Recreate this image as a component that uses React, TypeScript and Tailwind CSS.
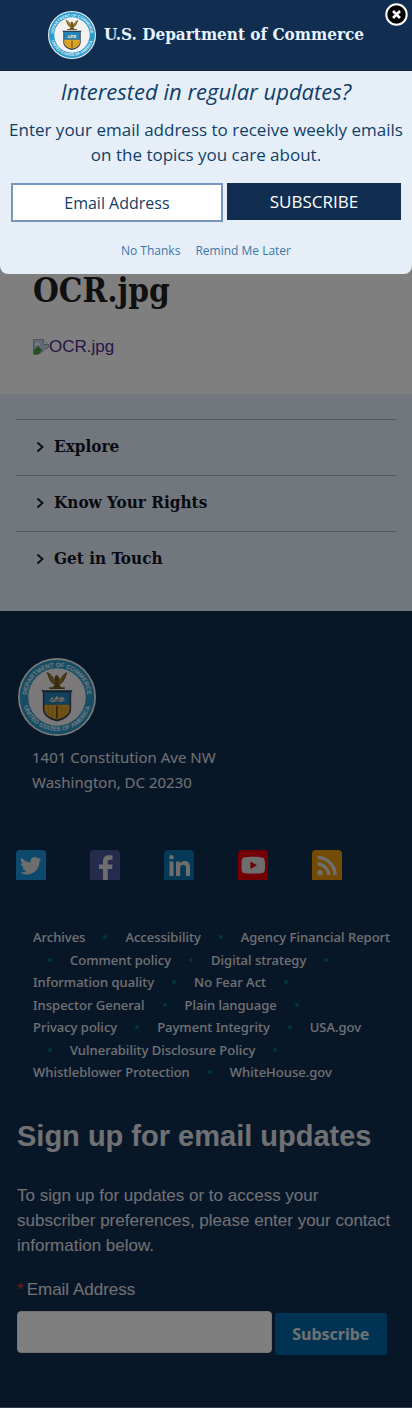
import { useId } from "react";

const serif = "font-['DejaVu_Serif_Condensed','DejaVu_Serif',serif] font-bold";
const linkRows: { lead: boolean; trail: boolean; items: string[] }[] = [
  { lead: false, trail: false, items: ["Archives", "Accessibility", "Agency Financial Report"] },
  { lead: true, trail: true, items: ["Comment policy", "Digital strategy"] },
  { lead: false, trail: true, items: ["Information quality", "No Fear Act"] },
  { lead: false, trail: true, items: ["Inspector General", "Plain language"] },
  { lead: false, trail: false, items: ["Privacy policy", "Payment Integrity", "USA.gov"] },
  { lead: true, trail: true, items: ["Vulnerability Disclosure Policy"] },
  { lead: false, trail: false, items: ["Whistleblower Protection", "WhiteHouse.gov"] },
];

function Seal({ className }: { className: string }) {
  const id = useId();
  return (
    <svg viewBox="0 0 80 80" className={className} role="img" aria-label="Department of Commerce seal">
      <defs>
        <path id={id + "t"} d="M9.300 46 A31.200 31.200 0 1 1 70.700 46" />
        <path id={id + "b"} d="M4.500 43 A35.700 35.700 0 0 0 75.500 43" />
      </defs>
      <circle cx="40" cy="40" r="40" fill="#f4f4f2" />
      <circle cx="40" cy="40" r="38.300" fill="#2d9bcb" />
      <circle cx="40" cy="40" r="29.500" fill="#f4f1f1" />
      <g fill="#e4f3fa" fontFamily="Liberation Sans, sans-serif" fontWeight="700" fontSize="6.300" textAnchor="middle">
        <text><textPath href={"#" + id + "t"} startOffset="50%">DEPARTMENT OF COMMERCE</textPath></text>
        <text><textPath href={"#" + id + "b"} startOffset="50%">UNITED STATES OF AMERICA</textPath></text>
      </g>
      <path d="M29.500 14C31 21 34 26 37.500 27L36 30h-4v1.800h16V30h-4l-1.500-3C46 26 49 21 50.500 14c-3 2-5.500 4-7.500 8l-1.500-3-1.500-1.500-2.500 1.500.5 3C35.500 18.500 33 16 29.500 14z" fill="#70571d" />
      <path d="M32 17.500l5 8.500M34 17.500l4 7.500M48 17.500l-5 8.500M46 17.500l-4 7.500" stroke="#c6a14a" strokeWidth=".9" />
      <path d="M24 33h32l-1.500 3v16c0 6-5 11-14.500 13-9.500-2-14.500-7-14.500-13V36z" fill="#263f58" />
      <path d="M26 35h28l-1 2v11H27V37z" fill="#2583b8" />
      <path d="M27 48h26v4c0 5-4 9-13 11-9-2-13-6-13-11z" fill="#e0a72c" />
      <path d="M39 49h2v13h-2z" fill="#71541a" />
      <path d="M31 50v9M35 50v11M45 50v11M49 50v9" stroke="#bd8421" strokeWidth=".7" />
      <path d="M32 44l3-4 2 2 3-3 2 2 4-1 2 3-3 2-5-1-4 1z" fill="#e8e7dd" />
      <path d="M33 43h14M37 41l-2 3M42 41l-1 3" stroke="#466171" strokeWidth=".7" />
    </svg>
  );
}

function Dot() {
  return (
    <span aria-hidden="true" className="flex w-[40px] shrink-0 justify-center">
      <span className="size-1 rounded-full bg-[#046b85]" />
    </span>
  );
}

const networks = [
  { name: "Twitter", color: "bg-[#1a91da]", art: <path fill="#ddd" d="M25.500 9c-.8.300-1.600.6-2.500.7.900-.6 1.600-1.400 1.900-2.400-.9.500-1.800.9-2.800 1.100A4.400 4.400 0 0 0 14.600 12.400c-3.700-.2-6.900-1.900-9.100-4.600-1.200 2.100-.6 4.600 1.400 5.900-.7 0-1.400-.2-2-.6 0 2.300 1.500 4 3.500 4.500-.6.200-1.300.2-2 .1.600 1.800 2.200 3 4.200 3A9 9 0 0 1 4 22.500c2 1.300 4.400 2 6.900 2 8.200 0 12.800-6.900 12.500-13.200.9-.6 1.600-1.400 2.100-2.300z" /> },
  { name: "Facebook", color: "bg-[#4a579b]", art: <path fill="#ddd" d="M13 30V19H9v-4.500h4V11.500c0-4.300 2.300-6.300 6.200-6.300 1.700 0 2.700.2 3.300.3v4.200h-2.400c-1.900 0-2.300.8-2.300 2.200v2.600h4.800l-.6 4.500h-4.200V30z" /> },
  { name: "LinkedIn", color: "bg-[#0873ae]", art: <path fill="#ddd" d="M5.500 11.500h4V26h-4zM7.500 5a2.300 2.300 0 1 1 0 4.600A2.300 2.300 0 0 1 7.500 5zM12 11.500h4v2c.8-1.500 2.300-2.400 4.500-2.400 4.200 0 5.500 2.500 5.500 6.500V26h-4v-7.500c0-2-.4-3.800-2.700-3.800-2.400 0-3.100 1.600-3.100 3.800V26H12z" /> },
  { name: "YouTube", color: "bg-[#e60008]", art: <><path fill="#ddd" d="M6 7.500c3-1 15-1 18.500 0 2 .5 2.500 2 2.500 8S26.500 22.500 24.500 23c-4 .8-14.500.8-18.500 0-2-.5-2.500-2-2.500-7.500S4 8 6 7.500z" /><path fill="#d8000c" d="M12.500 11.500v7.500l6.500-3.750z" /></> },
  { name: "RSS", color: "bg-[#e8960a]", art: <><circle cx="8" cy="22.700" r="2.700" fill="#ddd" /><path fill="none" stroke="#ddd" strokeWidth="3.400" d="M5.500 14A11.300 11.300 0 0 1 16.700 25.300M5.500 7.500A17.800 17.800 0 0 1 23.200 25.300" /></> },
];

function Popup() {
  return (
    <section role="dialog" aria-label="Email updates" className="absolute inset-x-0 top-0 rounded-b-lg bg-[#e6eff7] pb-[13px] text-center font-['Open_Sans',sans-serif] text-[#113e68]">
      <header className="flex h-[71px] items-center justify-center gap-2 border-b border-[#1b2440] bg-[#112e51]">
        <Seal className="size-[48px]" />
        <p className={serif + " text-[17px] whitespace-nowrap text-[#e8f4ff]"}>U.S. Department of Commerce</p>
      </header>
      <button type="button" aria-label="Close" className="absolute top-[3px] right-[4px] size-[23px]">
        <svg viewBox="0 0 23 23" className="size-full">
          <circle cx="11.500" cy="11.500" r="10.200" fill="#000" stroke="#fff" strokeWidth="2" />
          <path d="M8 8l7 7M15 8l-7 7" stroke="#fff" strokeWidth="2.600" />
        </svg>
      </button>
      <h2 className="mt-1 text-[22px] leading-[32px] italic">Interested in regular updates?</h2>
      <p className="mt-[10px] px-2 text-[17px] leading-[25px]">Enter your email address to receive weekly emails on the topics you care about.</p>
      <form className="mt-4 flex items-start gap-1 px-[11px]" onSubmit={(e) => e.preventDefault()}>
        <input type="email" aria-label="Email Address" placeholder="Email Address" className="h-[39px] min-w-0 flex-[210] border-2 border-[#7795be] bg-white text-center text-[16px] placeholder:text-[#113e68]" />
        <button type="submit" className="h-[37px] min-w-0 flex-[176] bg-[#112e51] text-[17px] text-white">SUBSCRIBE</button>
      </form>
      <div className="mt-[19px] flex justify-center gap-[15px] text-[12px] leading-[20px] text-[#3d76ab]">
        <a href="#no">No Thanks</a>
        <a href="#later">Remind Me Later</a>
      </div>
    </section>
  );
}

export default function App() {
  return (
    <div className="relative bg-white font-['Liberation_Sans',Arial,sans-serif]">
      <main className="px-[33px] pt-[267px] pb-[35px]">
        <h1 className={serif + " text-[33px] leading-[48px] text-[#212121]"}>OCR.jpg</h1>
        <a href="#image" className="mt-[20px] flex h-6 items-center text-[17px] text-[#4c2c92]">
          <svg viewBox="0 0 16 16" className="size-4" aria-hidden="true">
            <path d="M.5.500h10l5 5v3l-4 2-3 3-4 2h-4z" fill="#c0d5ee" stroke="#a5a5a5" />
            <path d="M1 15V11l4-4 4 4-3 4z" fill="#4c9a45" />
            <path d="M3 5c0-2 3-2 3 0h1v1H2V5z" fill="#fff" />
            <path d="M10.500.500v5h5" fill="#fff" stroke="#a5a5a5" />
          </svg>
          OCR.jpg
        </a>
      </main>
      <nav aria-label="Sections" className="bg-[#e4effc] px-4 pt-[25px] pb-[24px]">
        {["Explore", "Know Your Rights", "Get in Touch"].map((label) => (
          <button key={label} type="button" className={serif + " flex h-[56px] w-full items-center gap-[10px] border-t border-[#aeb3c0] pb-[2px] pl-5 text-left text-[17px] text-[#10151f]"}>
            <svg viewBox="0 0 8 12" className="h-3 w-2" aria-hidden="true"><path d="M1.500 1.500L6.500 6l-5 4.500" fill="none" stroke="currentColor" strokeWidth="1.800" /></svg>
            {label}
          </button>
        ))}
      </nav>
      <footer className="border-b border-[#6c7a92] bg-[#112e51] px-4 pt-[47px] pb-[52px] text-[#e0e2e6]">
        <Seal className="ml-[2px] size-[78px]" />
        <address className="mt-[9px] pl-4 font-['Noto_Sans',sans-serif] text-[15px] leading-[25px] not-italic">1401 Constitution Ave NW<br />Washington, DC 20230</address>
        <div className="mt-[55px] flex gap-[44px]">
          {networks.map((n) => (
            <a key={n.name} href={"#" + n.name} aria-label={n.name} className={n.color + " size-[30px] rounded-t-[4px]"}>
              <svg viewBox="0 0 30 30" className="size-full">{n.art}</svg>
            </a>
          ))}
        </div>
        <div className="mt-[46px] flex h-[157px] flex-col justify-between pl-[17px] font-['Noto_Sans',sans-serif] text-[13px] leading-[22px] font-medium whitespace-nowrap">
          {linkRows.map((row) => (
            <div key={row.items[0]} className="flex items-center">
              {row.lead && <span className="-ml-[3px]"><Dot /></span>}
              {row.items.map((item, i) => (
                <span key={item} className="flex items-center">
                  {i > 0 && <Dot />}
                  <a href="#link">{item}</a>
                </span>
              ))}
              {row.trail && <Dot />}
            </div>
          ))}
        </div>
        <div className="pl-[1px]">
          <h2 className="mt-[33px] text-[29px] leading-[40px] font-bold">Sign up for email updates</h2>
          <p className="mt-[27px] text-[17px] leading-[25px]">To sign up for updates or to access your subscriber preferences, please enter your contact information below.</p>
          <form onSubmit={(e) => e.preventDefault()} className="mt-[19px]">
            <label htmlFor="footer-email" className="flex gap-[3px] text-[17px] leading-[25px]"><span className="text-[#d83933]">*</span>Email Address</label>
            <div className="mt-[9px] flex gap-[3px] pr-[9px]">
              <input id="footer-email" type="email" className="h-[42px] min-w-0 flex-[254] rounded border border-[#e8e8e8] bg-white" />
              <button type="submit" className="mt-[2px] h-[42px] flex-[113] rounded-[3px] bg-[#0065a8] font-['Noto_Sans',sans-serif] text-[16px] font-bold">Subscribe</button>
            </div>
          </form>
        </div>
      </footer>
      <div className="absolute inset-0 bg-black/50" />
      <Popup />
    </div>
  );
}
